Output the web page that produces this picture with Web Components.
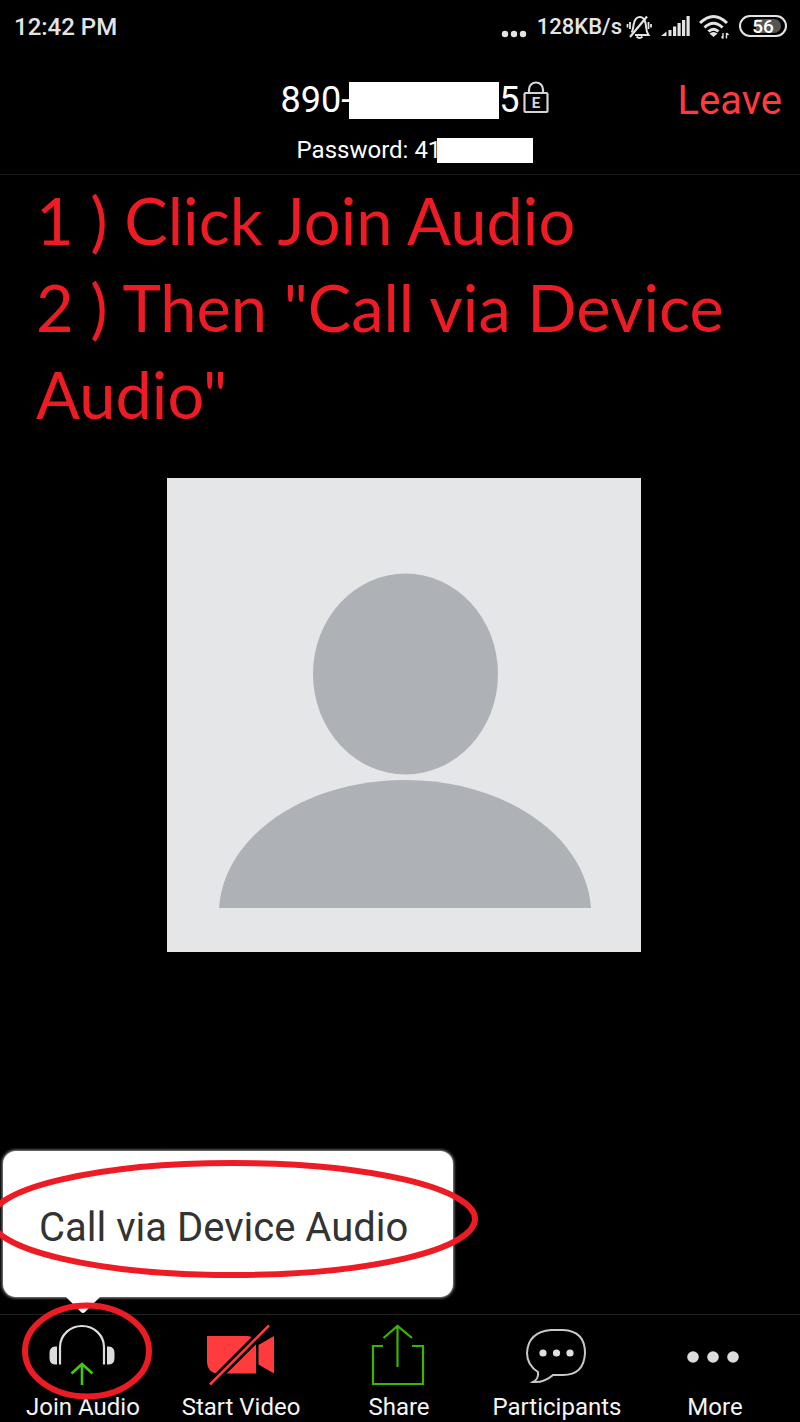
<!DOCTYPE html>
<html lang="en">
<head>
<meta charset="utf-8">
<meta name="viewport" content="width=device-width, initial-scale=1">
<title>Join Audio</title>
<style>
  body { margin: 0; background: #000; color: #fff; font-family: Roboto, "Liberation Sans", sans-serif; }
</style>
</head>
<body>
<meeting-app></meeting-app>

<template id="status-bar">
  <style>
    :host { display: flex; align-items: center; justify-content: space-between; height: 54px; padding: 0 12px 0 14px; color: #e4e4e4; font-size: 24px; font-weight: 500; line-height: 28px; }
    div { display: flex; align-items: center; }
    svg { display: block; }
    .rate { margin: 0 4px 0 8px; font-size: 22px; }
    .bell, .bars, .wifi { margin-right: 9px; }
  </style>
  <time>12:42 PM</time>
  <div>
    <svg width="28" height="28" viewBox="0 0 28 28" fill="currentColor"><circle cx="4" cy="21" r="3.200"/><circle cx="13" cy="21" r="3.200"/><circle cx="22" cy="21" r="3.200"/></svg>
    <span class="rate">128KB/s</span>
    <svg class="bell" width="26" height="28" viewBox="0 0 26 28" fill="none" stroke="currentColor" stroke-width="2"><path d="M5.500 19.500C7.500 17 7 13 8 10C9 6 11 4 14 4C17 4 18.500 6 19.500 10C20.500 14 19.500 18 22.500 22H9"/><path d="M4 24L21 3.500" stroke-width="2.200"/><path d="M10.500 23.500Q13.500 26.500 16.500 23.500"/><path d="M4 9V16M1.500 11V14.500M22.500 9V16M25 11V14.500" stroke-width="1.800"/></svg>
    <svg class="bars" width="29" height="28" viewBox="0 0 29 28" fill="currentColor"><path d="M0 23L5.500 18.500V23ZM7.500 17H10.500V23H7.500ZM12 13.500H15.200V23H12ZM16.500 10H19.700V23H16.500ZM21 7H24.200V23H21ZM25.500 3H28.700V23H25.500Z"/></svg>
    <svg class="wifi" width="30" height="28" viewBox="0 0 30 28" fill="none" stroke="currentColor" stroke-width="3"><path d="M1 10Q14.500 -3 28 10M5.500 14.500Q14.500 6 23.500 14.500M9.500 18.500Q14.500 14 19.500 18.500"/><path d="M14.500 24L10.500 20.500Q14.500 17.500 18.500 20.500Z" fill="currentColor" stroke="none"/><path d="M24 20V25.500M27.500 20V25.500M22.500 23.500L24 25.500M27.500 20L29.500 22" stroke-width="1.400"/></svg>
    <svg width="50" height="28" viewBox="0 0 50 28"><path d="M18 6H36A7 7 0 0 1 36 20H18Z" fill="#555"/><rect x="2" y="3" width="46" height="20" rx="10" fill="none" stroke="currentColor" stroke-width="2"/><text x="25" y="20" text-anchor="middle" font-size="19" fill="#fff">56</text></svg>
  </div>
</template>

<template id="redacted-block">
  <style>:host { display: block; background: #fff; }</style>
</template>

<template id="meeting-header">
  <style>
    :host { display: grid; grid-template-columns: 1fr auto 1fr; padding: 24px 18px 8px 48px; border-bottom: 1px solid #1c1c1c; }
    .center { grid-column: 2; display: flex; flex-direction: column; align-items: center; gap: 12px; }
    h1, p { margin: 0; display: flex; align-items: center; font-weight: 400; }
    h1 { font-size: 36px; line-height: 44px; }
    p { font-size: 24px; line-height: 32px; }
    h1 redacted-block { width: 150px; height: 37px; margin-left: -2px; }
    p redacted-block { width: 96px; height: 25px; margin-left: -4px; z-index: 1; }
    svg { display: block; margin-left: 4px; }
    button { grid-column: 3; justify-self: end; align-self: start; padding: 0; border: 0; background: none; color: #fe3b3e; font: 400 40px/46px Roboto, "Liberation Sans", sans-serif; cursor: pointer; }
  </style>
  <div class="center">
    <h1><span>890-</span><redacted-block></redacted-block><span>5</span>
      <svg width="26" height="40" viewBox="0 0 26 40" fill="none" stroke="#d4d4d8" stroke-width="2.200"><rect x="1.500" y="13" width="23" height="19" rx="1"/><path d="M6 13V9.500A7 7 0 0 1 20 9.500V13"/><text x="13" y="28" text-anchor="middle" font-size="15" font-weight="700" fill="#d4d4d8" stroke="none">E</text></svg>
    </h1>
    <p><span>Password: 41</span><redacted-block></redacted-block></p>
  </div>
  <button type="button">Leave</button>
</template>

<template id="step-notes">
  <style>
    :host { display: block; padding: 2px 36px 0; color: #ed1c24; font: 400 65px/87px Lato, "Open Sans", sans-serif; }
    p { margin: 0; }
  </style>
  <slot></slot>
</template>

<template id="user-avatar">
  <style>
    :host { display: block; width: 100%; max-width: 474px; }
    svg { display: block; width: 100%; height: auto; }
  </style>
  <svg viewBox="0 0 474 474" role="img" aria-label="Participant"><rect width="474" height="474" fill="#e4e6e8"/><ellipse cx="238.500" cy="196" rx="92.500" ry="100.500" fill="#aeb1b6"/><path d="M52 430C57 358 138 302 238 302C338 302 419 358 424 430Z" fill="#aeb1b6"/></svg>
</template>

<template id="audio-popover">
  <style>
    :host { position: absolute; left: 3px; bottom: 125px; width: 450px; }
    button { display: block; width: 100%; padding: 53px 0 45px 36px; border: 0; border-radius: 13px; background: #fff; box-shadow: 0 0 3px 1px #999; color: #333; font: 400 40px/48px Roboto, "Liberation Sans", sans-serif; text-align: left; cursor: pointer; }
    svg { position: absolute; pointer-events: none; }
    .tail { left: 62px; top: 100%; }
    .ring { left: -20px; top: 5px; overflow: visible; }
  </style>
  <button type="button">Call via Device Audio</button>
  <svg class="tail" width="36" height="18" viewBox="0 0 36 18"><path d="M0 -1H36L20 15Q18 17 16 15Z" fill="#fff"/></svg>
  <svg class="ring" width="500" height="126" viewBox="0 0 500 126"><ellipse cx="250" cy="63" rx="242" ry="56" fill="none" stroke="#ed1c24" stroke-width="6"/></svg>
</template>

<template id="tool-button">
  <style>
    :host { display: block; position: relative; }
    button { display: flex; flex-direction: column; align-items: center; width: 100%; padding: 0; border: 0; background: none; color: #f4f4f4; font: 400 24px/28px Roboto, "Liberation Sans", sans-serif; cursor: pointer; }
  </style>
  <button type="button"><slot name="icon"></slot><span><slot></slot></span></button>
  <slot name="mark"></slot>
</template>

<template id="meeting-toolbar">
  <style>
    :host { display: grid; grid-template-columns: repeat(5, 1fr); padding: 0 6px 1px 4px; border-top: 1px solid #222; }
    svg { display: block; }
    .mark { position: absolute; left: 50%; top: -16px; margin-left: -66px; pointer-events: none; }
  </style>
  <tool-button>
    <svg slot="icon" width="80" height="78" viewBox="0 0 80 78" fill="none"><path d="M17 49.500V32A22 21 0 0 1 61 32V49.500" stroke="#dcdcde" stroke-width="2.200"/><path d="M14 31.500H12Q6.500 32 6.500 38V43Q6.500 49 12 49.500H14ZM64 31.500H66Q71.500 32 71.500 38V43Q71.500 49 66 49.500H64Z" fill="#dcdcde"/><path d="M39 70V49M28.500 58.500L39 49L49.500 58.500" stroke="#45c813" stroke-width="2.600"/></svg>
    Join Audio
    <svg slot="mark" class="mark" width="140" height="104" viewBox="0 0 140 104"><ellipse cx="70" cy="52" rx="62" ry="45.500" fill="none" stroke="#ed1c24" stroke-width="6"/></svg>
  </tool-button>
  <tool-button>
    <svg slot="icon" width="80" height="78" viewBox="0 0 80 78"><path d="M6 21H47Q55 22 55 31V58.500H15Q7 57 6 48ZM57.500 30L73 21V58.500L57.500 49.500Z" fill="#ff3b3d"/><path d="M9 69.500L68 10.500" stroke="#000" stroke-width="8"/><path d="M9 69.500L68 10.500" stroke="#ff3b3d" stroke-width="2.600"/></svg>
    Start Video
  </tool-button>
  <tool-button>
    <svg slot="icon" width="80" height="78" viewBox="0 0 80 78" fill="none" stroke="#3db500" stroke-width="2.200"><path d="M24 31H14V69H64V31H53M38.500 52V11M24.500 23L38.500 11L53 23"/></svg>
    Share
  </tool-button>
  <tool-button>
    <svg slot="icon" width="80" height="78" viewBox="0 0 80 78" fill="none"><path d="M34 15H46Q68 16 68 38Q67 60 46 60H36Q27 68 16 67Q22 64 21 57Q10 50 10 38Q11 17 34 15Z" stroke="#c8c8c8" stroke-width="2"/><g fill="#e0e0e0"><circle cx="26" cy="38" r="3.600"/><circle cx="39.500" cy="38" r="3.600"/><circle cx="53" cy="38" r="3.600"/></g></svg>
    Participants
  </tool-button>
  <tool-button>
    <svg slot="icon" width="80" height="78" viewBox="0 0 80 78" fill="#dcdcdc"><circle cx="18" cy="42" r="5.800"/><circle cx="38" cy="42" r="5.800"/><circle cx="58" cy="42" r="5.800"/></svg>
    More
  </tool-button>
</template>

<template id="meeting-app">
  <style>
    :host { display: flex; flex-direction: column; min-height: 100vh; position: relative; overflow: hidden; background: #000; }
    main { flex: 1; display: flex; flex-direction: column; padding-bottom: 40px; }
    p { margin: 0; }
    user-avatar { margin: 40px auto 0; }
    .stage { padding-left: 8px; }
  </style>
  <status-bar></status-bar>
  <meeting-header></meeting-header>
  <main>
    <step-notes><p>1 ) Click Join Audio</p><p>2 ) Then "Call via Device Audio"</p></step-notes>
    <div class="stage"><user-avatar></user-avatar></div>
  </main>
  <audio-popover></audio-popover>
  <meeting-toolbar></meeting-toolbar>
</template>

<script>
  const define = (name) => customElements.define(name, class extends HTMLElement {
    constructor() {
      super();
      this.attachShadow({ mode: "open" }).append(document.getElementById(name).content.cloneNode(true));
    }
  });
  ["status-bar", "redacted-block", "meeting-header", "step-notes", "user-avatar",
   "audio-popover", "tool-button", "meeting-toolbar", "meeting-app"].forEach(define);
</script>
</body>
</html>
